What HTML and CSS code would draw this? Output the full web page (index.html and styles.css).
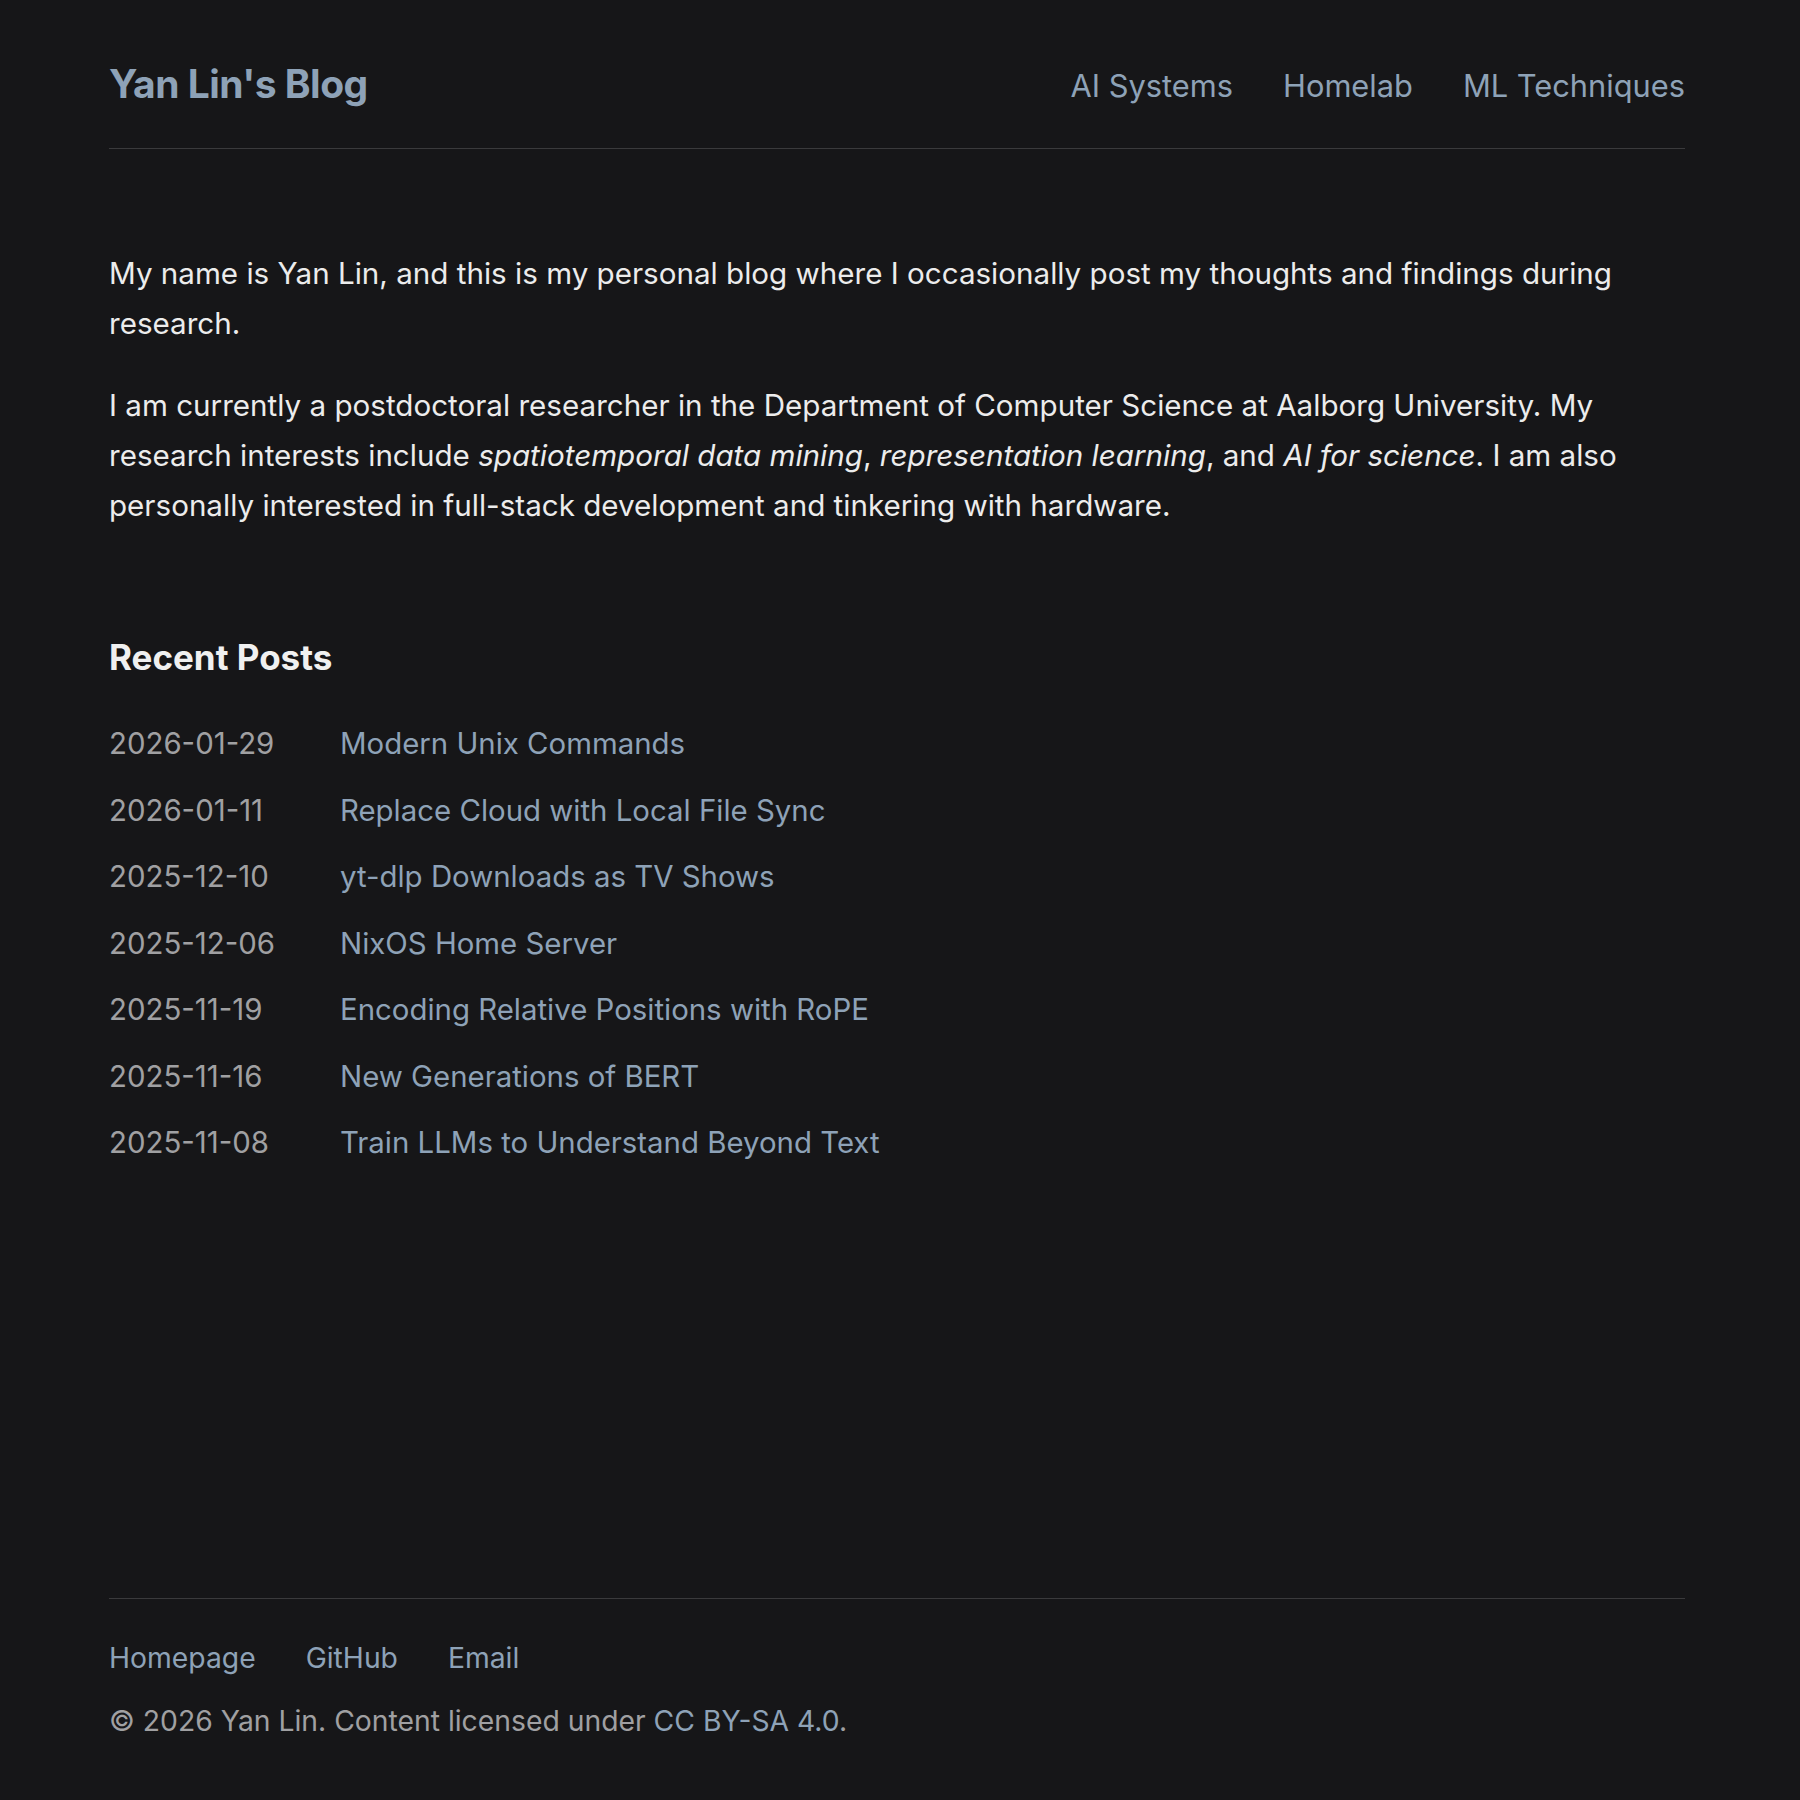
FILE: index.html
```html
<!DOCTYPE html>
<html lang="en">
<head>
<meta charset="utf-8">
<title>Yan Lin's Blog</title>
<link rel="stylesheet" href="styles.css">
</head>
<body>
<div class="page">
  <header class="site-header">
    <a class="site-title" href="#">Yan Lin's Blog</a>
    <nav class="site-nav">
      <a href="#">AI Systems</a>
      <a href="#">Homelab</a>
      <a href="#">ML Techniques</a>
    </nav>
  </header>
  <main class="content">
    <section class="intro">
      <p>My name is Yan Lin, and this is my personal blog where I occasionally post my thoughts and findings during research.</p>
      <p>I am currently a postdoctoral researcher in the Department of Computer Science at Aalborg University. My research interests include <em>spatiotemporal data mining</em>, <em>representation learning</em>, and <em>AI for science</em>. I am also personally interested in full-stack development and tinkering with hardware.</p>
    </section>
    <section class="recent">
      <h2 class="recent-title">Recent Posts</h2>
      <ul class="post-list">
        <li class="post"><span class="post-date">2026-01-29</span><a class="post-link" href="#">Modern Unix Commands</a></li>
        <li class="post"><span class="post-date">2026-01-11</span><a class="post-link" href="#">Replace Cloud with Local File Sync</a></li>
        <li class="post"><span class="post-date">2025-12-10</span><a class="post-link" href="#">yt-dlp Downloads as TV Shows</a></li>
        <li class="post"><span class="post-date">2025-12-06</span><a class="post-link" href="#">NixOS Home Server</a></li>
        <li class="post"><span class="post-date">2025-11-19</span><a class="post-link" href="#">Encoding Relative Positions with RoPE</a></li>
        <li class="post"><span class="post-date">2025-11-16</span><a class="post-link" href="#">New Generations of BERT</a></li>
        <li class="post"><span class="post-date">2025-11-08</span><a class="post-link" href="#">Train LLMs to Understand Beyond Text</a></li>
      </ul>
    </section>
  </main>
  <footer class="site-footer">
    <div class="footer-links">
      <a href="#">Homepage</a>
      <a href="#">GitHub</a>
      <a href="#">Email</a>
    </div>
    <p class="copyright">© 2026 Yan Lin. Content licensed under <a href="#">CC BY-SA 4.0</a>.</p>
  </footer>
</div>
</body>
</html>
```
FILE: styles.css
```css
html, body {
  margin: 0;
  padding: 0;
  background: #161618;
}
body {
  font-family: Inter, "Noto Sans", "Liberation Sans", sans-serif;
  font-size: 28px;
  line-height: 50px;
  color: #ececec;
}
a {
  color: #8ea2b7;
  text-decoration: none;
}
.page {
  box-sizing: border-box;
  min-height: 100vh;
  width: 1576px;
  margin-left: 109px;
  display: flex;
  flex-direction: column;
}
.site-header {
  display: flex;
  justify-content: space-between;
  align-items: center;
  padding: 57px 0 37px;
  border-bottom: 1px solid #3a3a3c;
}
.site-title {
  font-size: 39px;
  line-height: 50px;
  font-weight: 700;
  letter-spacing: -0.5px;
}
.site-nav {
  display: flex;
  gap: 50px;
  padding-top: 4px;
  font-size: 30.8px;
}
.content {
  flex: 1;
  padding-top: 99px;
}
.intro {
  font-size: 29.6px;
  line-height: 50px;
}
.intro p {
  margin: 0 0 32px;
}
.intro em {
  font-style: italic;
}
.recent {
  margin-top: 105px;
}
.recent-title {
  margin: 0;
  font-size: 35px;
  line-height: 44px;
  font-weight: 700;
  color: #f0f0f0;
}
.post-list {
  list-style: none;
  margin: 40px 0 0;
  padding: 0;
  display: flex;
  flex-direction: column;
  gap: 16.5px;
  font-size: 29.4px;
}
.post {
  display: flex;
}
.post-date {
  width: 231px;
  flex-shrink: 0;
  color: #a0a0a2;
}
.site-footer {
  border-top: 1px solid #3a3a3c;
  padding: 34px 0 54px;
  font-size: 28.3px;
}
.footer-links {
  display: flex;
  gap: 50px;
}
.copyright {
  margin: 13px 0 0;
  color: #a0a0a2;
}
```
